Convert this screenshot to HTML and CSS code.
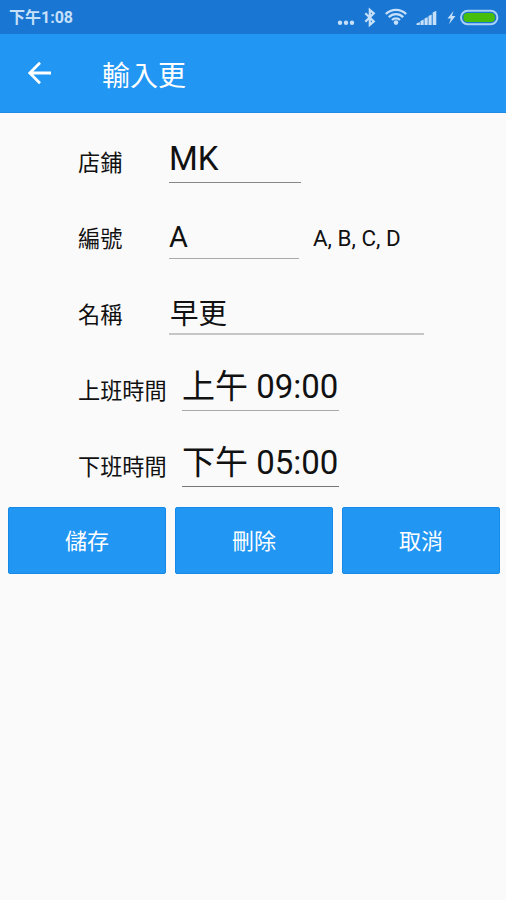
FILE: index.html
```html
<!DOCTYPE html>
<html lang="zh-Hant">
<head>
<meta charset="utf-8">
<title>輸入更</title>
<link rel="stylesheet" href="styles.css">
</head>
<body>
<div class="status">
  <span class="clock">下午1:08</span>
  <svg class="status-icons" width="164" height="34" viewBox="0 0 164 34">
    <g fill="#c6e0fa">
      <circle cx="3" cy="22.700" r="2.200"/><circle cx="9" cy="22.700" r="2.200"/><circle cx="15" cy="22.700" r="2.200"/>
      <circle cx="59" cy="22.600" r="2.300"/>
      <path d="M79.500 25v-1.500l3.300-1.500v3zM83.500 25v-4l3.200-1.500V25zM87.500 25v-6.500l3.200-1.500v8zM91.500 25v-9l3.200-1.500V25zM95.700 25V12.500l3.600-1.700V25z"/>
      <path d="M116.500 11L110.500 18.400h3.400L112 24.300l6.500-8.200H115z"/>
    </g>
    <path d="M28.300 13.200l8.500 8.300-4 3.400V10l4 3.400-8.500 8.300" fill="none" stroke="#c6e0fa" stroke-width="2.200"/>
    <path d="M48.800 15.200a14.500 14.500 0 0 1 20.400 0M51.800 18.300a10 10 0 0 1 14.400 0M55 21.200a5.600 5.600 0 0 1 8 0" transform="translate(0 -1.200)" fill="none" stroke="#c6e0fa" stroke-width="2.300"/>
    <rect x="124" y="10.800" width="36.400" height="13.400" rx="6.700" fill="#1976d2" stroke="#a9d0f7" stroke-width="2"/>
    <rect x="126.500" y="13" width="31.400" height="9" rx="4" fill="#47bd0c"/>
  </svg>
</div>
<header class="appbar">
  <svg class="back" width="28" height="28" viewBox="0 0 28 28"><path d="M25 14H3.500M14 3.800L3.800 14 14 24.200" fill="none" stroke="#fff" stroke-width="2.800"/></svg>
  <h1 class="title">輸入更</h1>
</header>
<main>
  <div class="row"><span class="label">店鋪</span><span class="field shop">MK</span></div>
  <div class="row"><span class="label">編號</span><span class="field code">A</span><span class="hint">A, B, C, D</span></div>
  <div class="row"><span class="label">名稱</span><span class="field name">早更</span></div>
  <div class="row"><span class="label wide">上班時間</span><span class="field time">上午 09:00</span></div>
  <div class="row"><span class="label wide">下班時間</span><span class="field time dark">下午 05:00</span></div>
  <div class="actions">
    <button class="btn">儲存</button>
    <button class="btn">刪除</button>
    <button class="btn">取消</button>
  </div>
</main>
</body>
</html>
```
FILE: styles.css
```css
* { box-sizing: border-box; }
body {
  margin: 0;
  min-height: 900px;
  background: #fafafa;
  color: #111;
  font-family: Roboto, "Noto Sans CJK TC", sans-serif;
}
.status {
  height: 34px;
  padding: 0 5px 0 9px;
  background: #1976d2;
  display: flex;
  justify-content: space-between;
}
.clock {
  font-size: 16px;
  font-weight: 700;
  line-height: 35px;
  color: #c6e0fa;
  white-space: nowrap;
}
.status-icons { display: block; }
.appbar {
  height: 79px;
  padding: 0 26px;
  background: #2196f3;
  border-bottom: 1px solid #1b8be6;
  display: flex;
  align-items: center;
}
.back { width: 28px; height: 28px; }
.title {
  margin: 7px 0 0 48px;
  font-size: 28px;
  font-weight: 400;
  line-height: 40px;
  color: #fff;
}
.row {
  height: 76px;
  padding: 20px 0 6px 78px;
  display: flex;
}
.label {
  width: 91px;
  font-size: 22.200px;
  line-height: 60px;
  white-space: nowrap;
}
.label.wide { width: 104px; }
.field {
  height: 50px;
  border-bottom: 1px solid #888;
  font-size: 33px;
  line-height: 52px;
  white-space: nowrap;
}
.shop { width: 132px; }
.code { width: 130px; font-size: 29px; border-color: #aaa; line-height: 56px; }
.name { width: 255px; padding-left: 1px; font-size: 28.500px; line-height: 60px; border-bottom: 2px solid #c6c6c6; }
.time { width: 157px; border-color: #aaa; }
.time.dark { border-color: #777; }
.hint {
  margin-left: 14px;
  font-size: 22.400px;
  line-height: 59px;
}
.actions {
  padding: 14px 6px 0 8px;
  display: grid;
  grid-template-columns: repeat(3, 1fr);
  gap: 9px;
}
.btn {
  height: 67px;
  padding: 3px 0 0;
  border: 1px solid #168ae8;
  border-radius: 2px;
  background: #2196f3;
  color: #fff;
  font: 22px/62px Roboto, "Noto Sans CJK TC", sans-serif;
}
```
